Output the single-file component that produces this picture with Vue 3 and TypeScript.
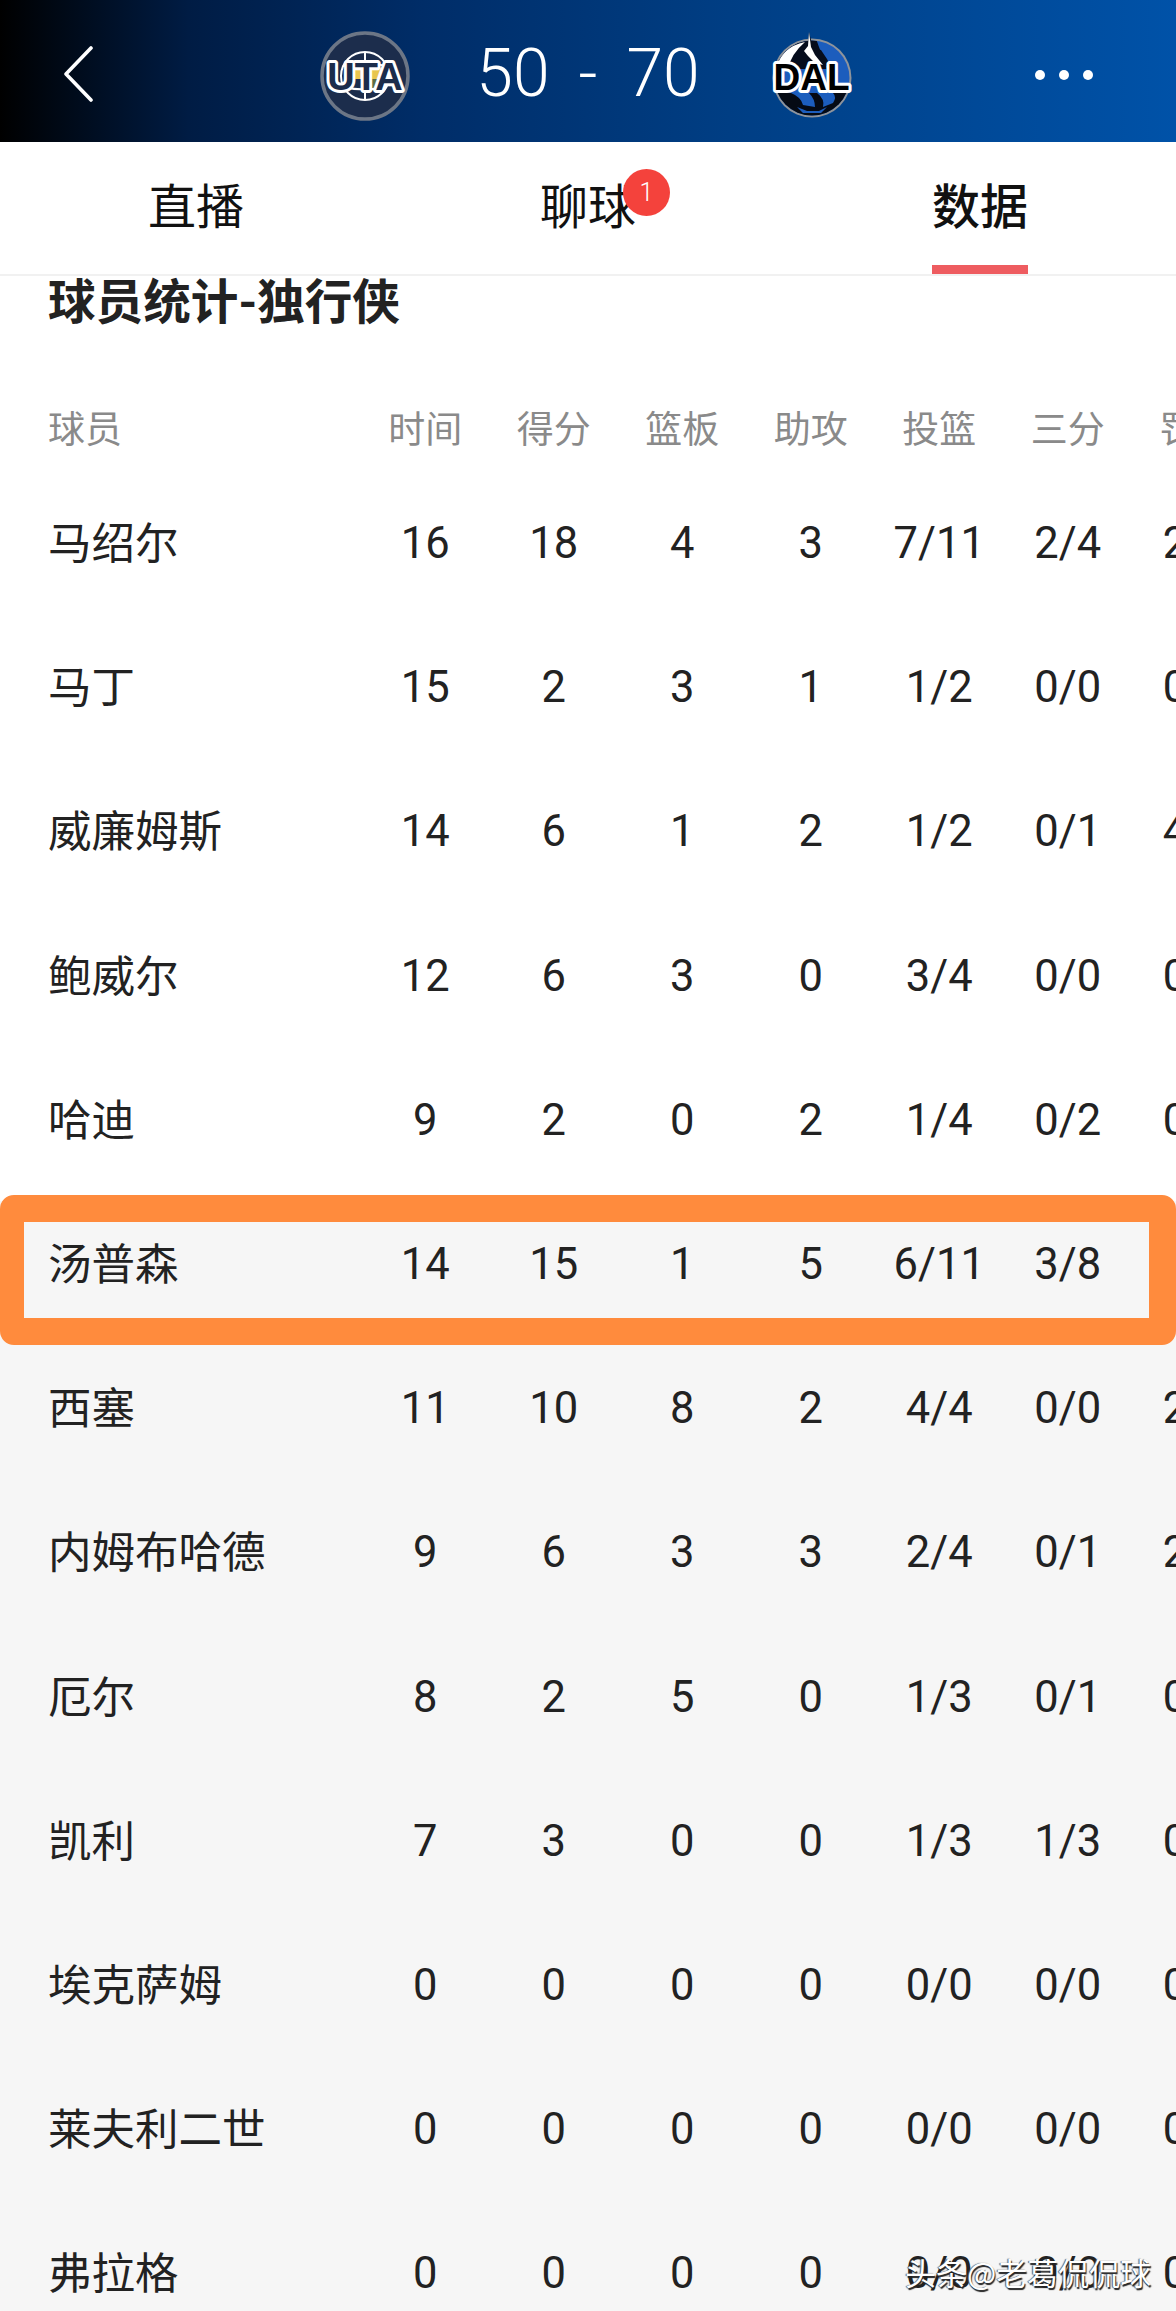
<script setup lang="ts">
interface Row { name: string; vals: string[]; muted?: boolean; marked?: boolean }
const cols: string[] = ['时间', '得分', '篮板', '助攻', '投篮', '三分', '罚球']
const rows: Row[] = [
  { name: '马绍尔', vals: ['16', '18', '4', '3', '7/11', '2/4', '2/2'] },
  { name: '马丁', vals: ['15', '2', '3', '1', '1/2', '0/0', '0/0'] },
  { name: '威廉姆斯', vals: ['14', '6', '1', '2', '1/2', '0/1', '4/4'] },
  { name: '鲍威尔', vals: ['12', '6', '3', '0', '3/4', '0/0', '0/0'] },
  { name: '哈迪', vals: ['9', '2', '0', '2', '1/4', '0/2', '0/0'] },
  { name: '汤普森', vals: ['14', '15', '1', '5', '6/11', '3/8', '0/0'], muted: true, marked: true },
  { name: '西塞', vals: ['11', '10', '8', '2', '4/4', '0/0', '2/2'], muted: true },
  { name: '内姆布哈德', vals: ['9', '6', '3', '3', '2/4', '0/1', '2/2'], muted: true },
  { name: '厄尔', vals: ['8', '2', '5', '0', '1/3', '0/1', '0/0'], muted: true },
  { name: '凯利', vals: ['7', '3', '0', '0', '1/3', '1/3', '0/0'], muted: true },
  { name: '埃克萨姆', vals: ['0', '0', '0', '0', '0/0', '0/0', '0/0'], muted: true },
  { name: '莱夫利二世', vals: ['0', '0', '0', '0', '0/0', '0/0', '0/0'], muted: true },
  { name: '弗拉格', vals: ['0', '0', '0', '0', '0/0', '0/0', '0/0'], muted: true },
]
</script>

<template>
  <div class="page">
    <header class="top">
      <div class="top-left">
        <svg class="back" width="32" height="56" viewBox="0 0 32 56">
          <path d="M29 2 L4 28 L29 54" fill="none" stroke="#fff" stroke-width="3.6" stroke-linecap="round" stroke-linejoin="round" />
        </svg>
      </div>
      <div class="match">
        <svg class="logo" width="100" height="110" viewBox="0 0 100 110">
          <circle cx="50" cy="55" r="43" fill="#1c2d4c" stroke="#6c7686" stroke-width="3.5" />
          <rect x="40" y="47" width="26" height="11" fill="#e8c64e" />
          <rect x="52" y="58" width="18" height="12" fill="#5d6d42" />
          <circle cx="50" cy="55" r="24" fill="none" stroke="#fff" stroke-width="2" />
          <path d="M50 31 V79 M28 45 Q50 40 72 45 M28 66 Q50 71 72 66" fill="none" stroke="#fff" stroke-width="2" />
          <text class="logo-text uta" x="50" y="69" text-anchor="middle">UTA</text>
        </svg>
        <div class="score"><span>50</span><span>-</span><span>70</span></div>
        <svg class="logo" width="100" height="110" viewBox="0 0 100 110">
          <defs>
            <clipPath id="dal-disc"><circle cx="51" cy="57" r="37.5" /></clipPath>
          </defs>
          <circle cx="51" cy="57" r="39.5" fill="#8f949b" />
          <g clip-path="url(#dal-disc)">
            <rect x="10" y="15" width="82" height="84" fill="#1c5dbd" />
            <path d="M10 15 H54 L66 48 H10 Z" fill="#050c1c" />
            <path d="M15 48 Q20 26 44 21 Q30 33 27 48 Z" fill="#fff" />
            <path d="M10 72 H92 V99 H10 Z" fill="#050a14" />
            <path d="M30 72 Q40 76 42 84 L54 86 Q54 78 48 72 Z M56 72 Q64 78 62 86 L72 82 Q76 76 72 72 Z M36 86 L46 90 L58 90 L66 86 L60 92 L42 92 Z" fill="#1c5dbd" />
          </g>
          <path d="M48 11 L52 27 L60 29 L66 38 L70 46 L60 44 L54 37 L46 36 L42 30 L47 26 Z" fill="#060d1c" />
          <path d="M48 11 L50 26 L54 34 L62 44 L54 42 L47 35 L43 30 L47 25 Z" fill="#fff" />
          <text class="logo-text dal" x="50.5" y="69" text-anchor="middle">DAL</text>
        </svg>
      </div>
      <div class="top-right">
        <i class="dot"></i><i class="dot"></i><i class="dot"></i>
      </div>
    </header>

    <nav class="tabs">
      <div class="tab"><span>直播</span></div>
      <div class="tab"><span class="with-badge">聊球<b class="badge">1</b></span></div>
      <div class="tab active"><span>数据</span></div>
    </nav>

    <main class="stats">
      <h2 class="title">球员统计-独行侠</h2>
      <div class="line head">
        <div class="name">球员</div>
        <div v-for="c in cols" :key="c" class="cell">{{ c }}</div>
      </div>
      <div v-for="r in rows" :key="r.name" class="line row" :class="{ muted: r.muted, marked: r.marked }">
        <div class="name">{{ r.name }}</div>
        <div v-for="(v, i) in r.vals" :key="i" class="cell">{{ v }}</div>
        <div v-if="r.marked" class="mark"></div>
      </div>
    </main>

    <div class="watermark">头条@老葛侃侃球</div>
  </div>
</template>

<style scoped>
.page {
  position: relative;
  width: 1176px;
  height: 2311px;
  overflow: hidden;
  background: #fff;
  font-family: Roboto, "Noto Sans CJK SC", sans-serif;
  color: #222;
}
.top {
  height: 142px;
  box-sizing: border-box;
  padding-top: 6px;
  display: grid;
  grid-template-columns: 1fr 538px 1fr;
  align-items: center;
  background: linear-gradient(90deg, #000 0, #001c44 16%, #002d68 36%, #003e84 62%, #0052a8 100%);
}
.top-left { padding-left: 62px; display: flex; }
.back { margin-top: -1px; }
.top-right {
  display: flex;
  justify-content: flex-end;
  gap: 14px;
  padding-right: 83px;
  padding-top: 2px;
}
.dot {
  width: 10px;
  height: 10px;
  border-radius: 50%;
  background: #fff;
}
.match {
  display: flex;
  justify-content: space-between;
  align-items: center;
  margin: 0 -4px;
}
.logo { display: block; margin-top: 4px; }
.logo-text {
  font-family: "Liberation Sans", sans-serif;
  font-weight: 700;
  paint-order: stroke;
  stroke: #fff;
  stroke-linejoin: round;
}
.uta { font-size: 38px; fill: #1b2c4b; stroke-width: 6px; }
.dal { font-size: 37px; fill: #000; stroke-width: 6px; }
.score {
  display: flex;
  align-items: center;
  gap: 29px;
  color: #fff;
  font-size: 66px;
  line-height: 70px;
  font-weight: 300;
}
.tabs {
  height: 134px;
  box-sizing: border-box;
  display: grid;
  grid-template-columns: repeat(3, 1fr);
  border-bottom: 2px solid #f1f1f1;
}
.tab {
  display: flex;
  justify-content: center;
  padding-top: 36px;
  font-size: 48px;
  line-height: 60px;
  color: #111;
}
.tab span {
  position: relative;
  height: 96px;
  box-sizing: border-box;
  display: block;
}
.active { font-weight: 500; }
.active span { border-bottom: 9px solid #ee5c60; }
.badge {
  position: absolute;
  left: 83px;
  top: -9px;
  width: 47px;
  height: 47px;
  border-radius: 50%;
  background: #f4423c;
  color: #fff;
  font-size: 25px;
  line-height: 47px;
  font-weight: 300;
  text-align: center;
}
.title {
  margin: 0;
  padding-left: 48px;
  font-size: 47.6px;
  line-height: 54px;
  font-weight: 700;
  color: #222;
}
.line {
  display: grid;
  grid-template-columns: 361px repeat(7, 128.5px);
  align-items: center;
  position: relative;
}
.name { padding-left: 48px; white-space: nowrap; }
.cell { text-align: center; white-space: nowrap; }
.head {
  padding-top: 54px;
  height: 86px;
  font-size: 37px;
  color: #8a8a8a;
}
.row {
  height: 144.2px;
  font-size: 43.5px;
  color: #222;
}
.row .cell { padding-top: 3px; }
.row .name { padding-bottom: 3px; }
.muted { background: #f6f6f6; }
.marked { background: linear-gradient(#fff 10px, #f6f6f6 10px); }
.mark {
  position: absolute;
  z-index: 1;
  left: 0;
  top: 4px;
  width: 1176px;
  height: 150px;
  box-sizing: border-box;
  border: solid #ff8b3d;
  border-width: 27px 27px 27px 24px;
  border-radius: 14px;
}
.watermark {
  position: absolute;
  z-index: 2;
  left: 905px;
  top: 2252px;
  font-family: "Noto Sans CJK SC", sans-serif;
  font-size: 31px;
  line-height: 40px;
  white-space: nowrap;
  color: #fff;
  text-shadow: 1px 2px 1px #222, -1px 0 1px #555;
}
</style>
